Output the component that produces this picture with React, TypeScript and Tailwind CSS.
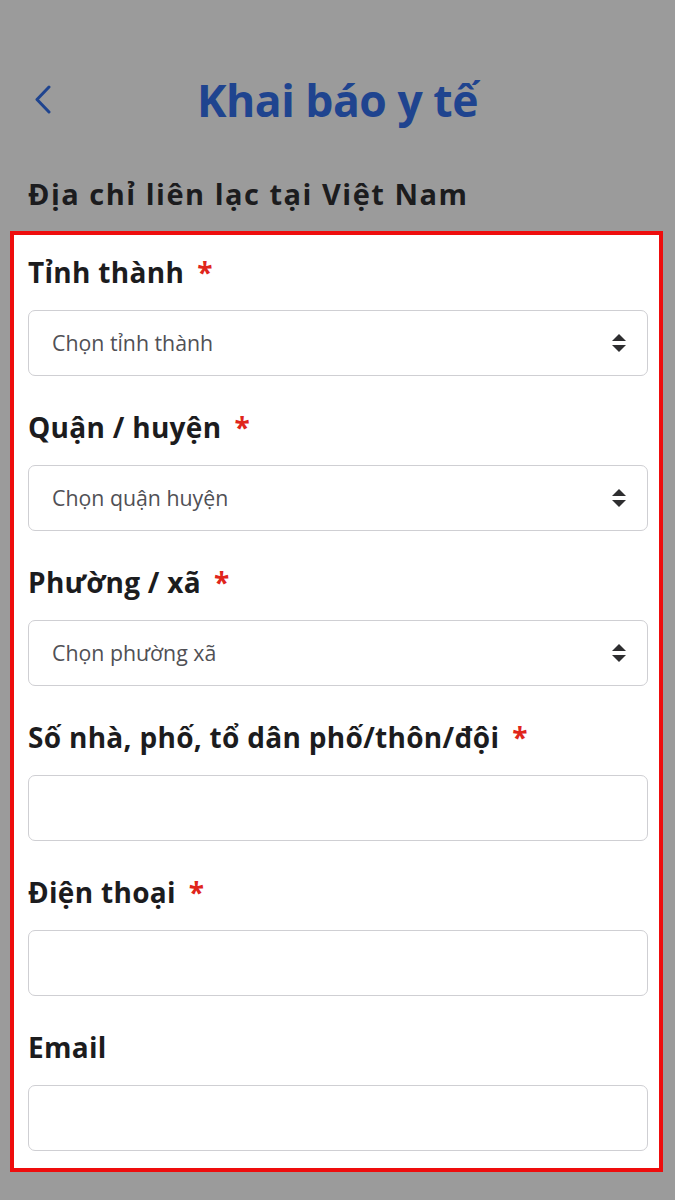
import React from "react";

const font = { fontFamily: '"Open Sans", "Noto Sans", sans-serif' };

function Field({ label, required, placeholder, select, last }: { label: string; required?: boolean; placeholder?: string; select?: boolean; last?: boolean }) {
  return (
    <div className={last ? "" : "mb-[33px]"}>
      <div className="h-[36px] flex items-center text-[28px] font-bold text-[#1c1c1e] leading-none tracking-[0.3px]">
        <span>{label}</span>
        {required && <span className="ml-[13px] text-[#e0251b]">*</span>}
      </div>
      <div className="mt-[20px] h-[66px] rounded-[7px] border-[1.5px] border-[#cfcfd3] bg-white flex items-center pl-[23px] pr-[20px]">
        {placeholder && <span className="flex-1 text-[21.3px] text-[#505055]">{placeholder}</span>}
        {select && (
          <svg width="16" height="20" viewBox="0 0 16 20" className="ml-auto">
            <path d="M8 1 L15 8 L1 8 Z" fill="#2e2e30" />
            <path d="M1 12 L15 12 L8 19 Z" fill="#2e2e30" />
          </svg>
        )}
      </div>
    </div>
  );
}

export default function App() {
  return (
    <div className="w-[675px] min-h-[1200px] bg-[#9b9b9b]" style={font}>
      <div className="pt-[70px] h-[130px] relative flex items-center justify-center">
        <svg width="20" height="30" viewBox="0 0 20 30" className="absolute left-[33px] top-[85px]">
          <path d="M16 2 L4 14.5 L16 27" fill="none" stroke="#1f448f" strokeWidth="3" strokeLinecap="round" strokeLinejoin="round" />
        </svg>
        <h1 className="text-[44.5px] font-bold text-[#1f448f] tracking-[-0.5px] leading-none">Khai báo y tế</h1>
      </div>
      <div className="mt-[43px] px-[28px] h-[40px] flex items-center text-[29px] font-bold text-[#1c1c1e] leading-none tracking-[1.5px]">
        Địa chỉ liên lạc tại Việt Nam
      </div>
      <div className="mt-[18px] ml-[10px] mr-[12px] border-[4px] border-[#ee0d0d] bg-white pt-[19px] pb-[17px] pl-[14px] pr-[11px]">
        <Field label="Tỉnh thành" required placeholder="Chọn tỉnh thành" select />
        <Field label="Quận / huyện" required placeholder="Chọn quận huyện" select />
        <Field label="Phường / xã" required placeholder="Chọn phường xã" select />
        <Field label="Số nhà, phố, tổ dân phố/thôn/đội" required />
        <Field label="Điện thoại" required />
        <Field label="Email" last />
      </div>
    </div>
  );
}
